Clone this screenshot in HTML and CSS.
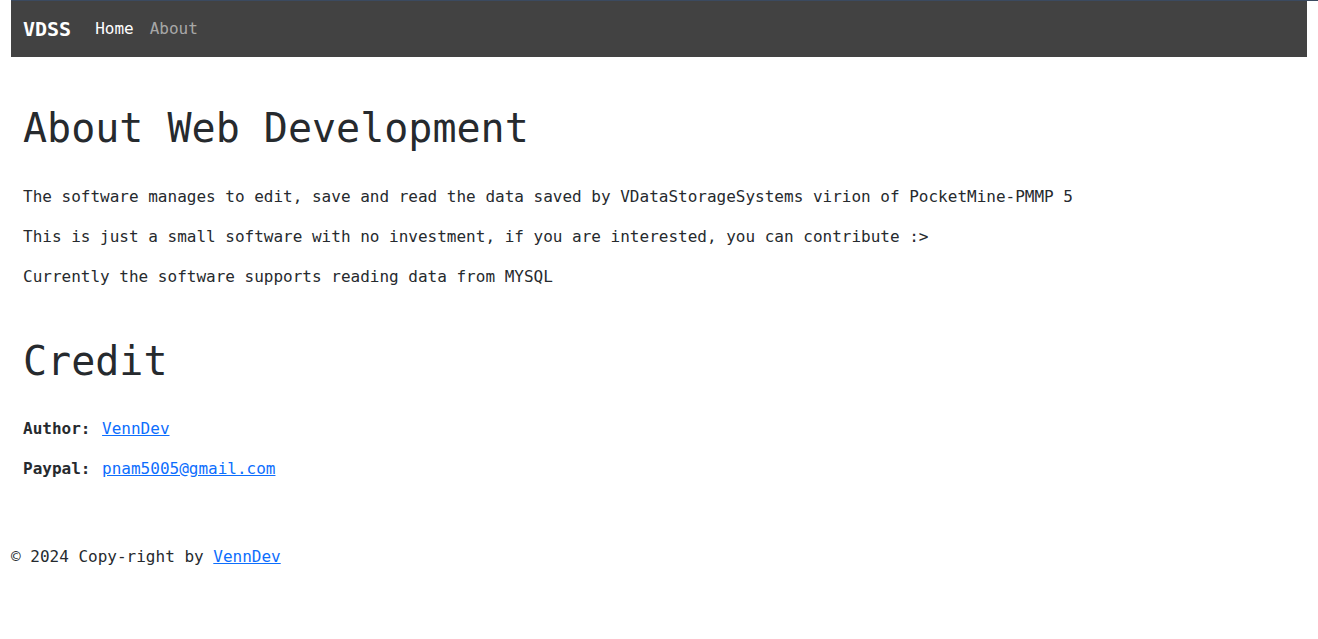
FILE: index.html
```html
<!DOCTYPE html>
<html lang="en">
<head>
<meta charset="utf-8">
<title>VDSS - About</title>
<link rel="stylesheet" href="styles.css">
</head>
<body>
<div class="page">
  <nav class="navbar">
    <a class="brand" href="#">VDSS</a>
    <ul class="nav">
      <li><a class="nav-link active" href="#">Home</a></li>
      <li><a class="nav-link" href="#">About</a></li>
    </ul>
  </nav>
  <main class="content">
    <section class="about">
      <h1 class="title">About Web Development</h1>
      <div class="body">
        <p>The software manages to edit, save and read the data saved by VDataStorageSystems virion of PocketMine-PMMP 5</p>
        <p>This is just a small software with no investment, if you are interested, you can contribute :&gt;</p>
        <p>Currently the software supports reading data from MYSQL</p>
      </div>
    </section>
    <section class="credit">
      <h1 class="title">Credit</h1>
      <div class="body">
        <p><strong>Author:</strong> <a href="#">VennDev</a></p>
        <p><strong>Paypal:</strong> <a href="#">pnam5005@gmail.com</a></p>
      </div>
    </section>
  </main>
  <footer class="footer">
    <p>© 2024 Copy-right by <a href="#">VennDev</a></p>
  </footer>
</div>
</body>
</html>
```

FILE: styles.css
```css
html, body {
  margin: 0;
  padding: 0;
}
body {
  background: #fff;
  color: #262a2e;
  font-family: "DejaVu Sans Mono", "Liberation Mono", monospace;
  font-size: 16px;
  line-height: 24px;
  position: relative;
}
body::before {
  content: "";
  position: absolute;
  left: 11px;
  right: 0;
  top: 0;
  height: 1px;
  background: #3b4a60;
}
.page {
  padding: 1px 11px 0;
}
a {
  color: #0d6efd;
  text-decoration: underline;
}
.navbar {
  background: #424242;
  height: 56px;
  padding: 0 12px;
  display: flex;
  align-items: center;
  box-sizing: border-box;
}
.brand {
  color: #fff;
  font-size: 20px;
  line-height: 30px;
  font-weight: bold;
  text-decoration: none;
  margin-right: 16px;
}
.nav {
  display: flex;
  list-style: none;
  margin: 0;
  padding: 0;
}
.nav-link {
  display: block;
  padding: 8px;
  color: rgba(255, 255, 255, 0.55);
  text-decoration: none;
}
.nav-link.active {
  color: #fff;
}
.content {
  padding: 0 12px;
}
.title {
  font-size: 40px;
  line-height: 48px;
  font-weight: 500;
  margin: 0 0 8px;
}
.about {
  padding-top: 47px;
}
.about .body {
  padding-top: 25px;
}
.credit {
  padding-top: 32px;
}
.credit .body {
  padding-top: 24px;
}
.body p {
  margin: 0 0 16px;
}
.body strong {
  margin-right: 2px;
}
strong {
  font-weight: bold;
}
.footer {
  padding-top: 48px;
}
.footer p {
  margin: 0;
}
```
